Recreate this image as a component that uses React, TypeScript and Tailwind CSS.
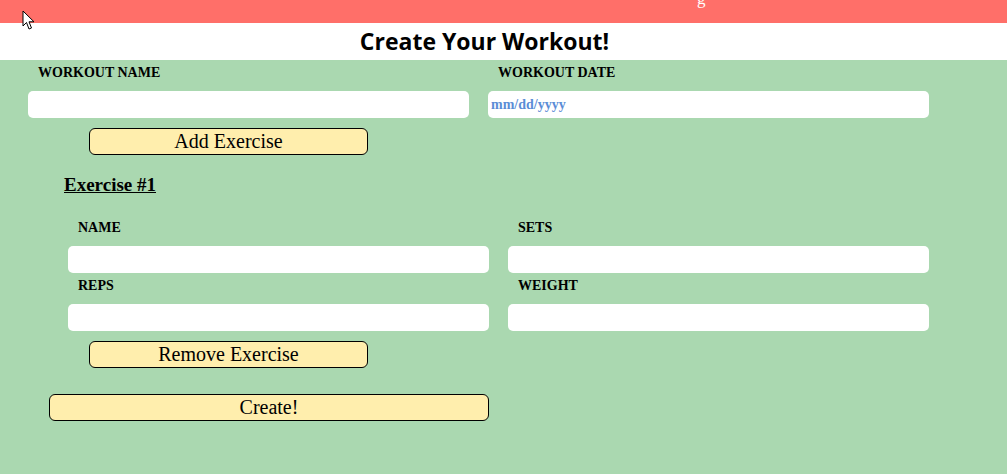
import React from 'react';

const serif = { fontFamily: '"Liberation Serif", "Times New Roman", serif' };

const Field = ({ label, placeholder }: { label: string; placeholder?: string }) => (
  <div className="flex flex-col">
    <label className="pl-[10px] h-[16px] leading-[16px] pt-[1px] text-[14px] font-bold text-black mb-[11px]" style={serif}>
      {label}
    </label>
    <input
      type="text"
      placeholder={placeholder}
      className="h-[27px] w-full rounded-[5px] bg-white px-[3px] text-[14px] font-bold outline-none placeholder:text-[#5b8dd6]"
      style={serif}
    />
  </div>
);

const YellowButton = ({ children, className }: { children: React.ReactNode; className: string }) => (
  <button
    className={`h-[27px] rounded-[6px] border border-black bg-[#ffeead] text-[20px] leading-[25px] text-black ${className}`}
    style={serif}
  >
    {children}
  </button>
);

export default function App() {
  return (
    <div className="relative flex min-h-[474px] w-full flex-col bg-[#aad8b0]">
      {/* nav bar, scrolled mostly out of view */}
      <div className="h-[23px] overflow-hidden bg-[#ff6f69]">
        <span className="ml-[697px] block -mt-[14px] text-[17px] text-white" style={serif}>
          g
        </span>
      </div>

      <div className="flex h-[37px] items-center justify-center bg-white pr-[38px]">
        <h1 className="text-[23px] font-bold text-black" style={{ fontFamily: '"Open Sans", "Noto Sans", sans-serif' }}>
          Create Your Workout!
        </h1>
      </div>

      <div className="flex flex-col pt-[4px]">
        <div className="ml-[28px] grid w-[901px] grid-cols-2 gap-x-[19px]">
          <Field label="WORKOUT NAME" />
          <Field label="WORKOUT DATE" placeholder="mm/dd/yyyy" />
        </div>

        <YellowButton className="ml-[89px] mt-[10px] w-[279px]">Add Exercise</YellowButton>

        <h2 className="ml-[64px] mt-[20px] h-[20px] text-[19px] font-bold leading-[20px] text-black underline" style={serif}>
          Exercise #1
        </h2>

        <div className="ml-[68px] mt-[24px] grid w-[861px] grid-cols-2 gap-x-[19px] gap-y-[4px]">
          <Field label="NAME" />
          <Field label="SETS" />
          <Field label="REPS" />
          <Field label="WEIGHT" />
        </div>

        <YellowButton className="ml-[89px] mt-[10px] w-[279px]">Remove Exercise</YellowButton>

        <YellowButton className="ml-[49px] mt-[26px] w-[440px]">Create!</YellowButton>
      </div>

      {/* mouse pointer captured in the screenshot */}
      <svg className="absolute left-[22px] top-[10px]" width="15" height="21" viewBox="0 0 15 21">
        <path d="M1 1 L1 16 L4.5 12.5 L7 19 L9.5 18 L7 11.8 L12 11.8 Z" fill="white" stroke="black" strokeWidth="1" strokeLinejoin="round" />
      </svg>
    </div>
  );
}
